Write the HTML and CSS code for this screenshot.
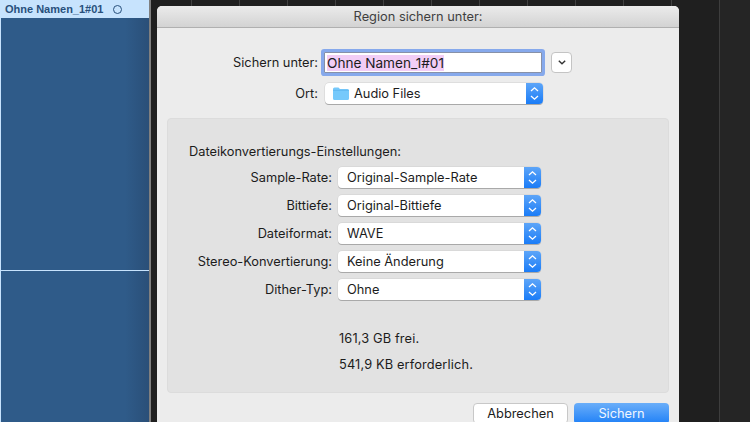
FILE: index.html
```html
<!DOCTYPE html>
<html lang="de">
<head>
    <meta charset="UTF-8">
    <meta name="viewport" content="width=device-width, initial-scale=1.0">
    <title>Region sichern unter</title>
    <link rel="stylesheet" href="styles.css">
</head>
<body>
    <div class="stage">
        <!-- Region im Hintergrund -->
        <div class="region">
            <div class="region-head">
                <span class="region-name">Ohne Namen_1#01</span>
                <span class="region-dot"></span>
            </div>
            <div class="region-top"></div>
            <div class="region-bottom"></div>
        </div>

        <!-- Dialog -->
        <div class="dialog">
            <div class="titlebar">Region sichern unter:</div>
            <div class="dialog-body">
                <div class="top-form">
                    <div class="row">
                        <label class="top-label">Sichern unter:</label>
                        <div class="name-input"><span class="selected">Ohne Namen_1#01</span></div>
                        <button class="expand">
                            <svg width="8" height="5" viewBox="0 0 8 5"><path d="M0.8 0.8 L4 3.8 L7.2 0.8" fill="none" stroke="#333" stroke-width="1.4"/></svg>
                        </button>
                    </div>
                    <div class="row">
                        <label class="top-label">Ort:</label>
                        <div class="select select-ort">
                            <svg class="folder" width="16" height="13" viewBox="0 0 16 13"><path d="M0 2 Q0 0.5 1.5 0.5 H5.5 L7 2 H14.5 Q16 2 16 3.5 V11.5 Q16 13 14.5 13 H1.5 Q0 13 0 11.5 Z" fill="#76c9fb"/><path d="M0 3.4 H16" stroke="#5db6ee" stroke-width="0.8"/></svg>
                            <span class="select-text">Audio Files</span>
                            <span class="stepper">
                                <svg width="9" height="15" viewBox="0 0 9 15"><path d="M1 5 L4.5 1.8 L8 5 M1 10 L4.5 13.2 L8 10" fill="none" stroke="#fff" stroke-width="1.3"/></svg>
                            </span>
                        </div>
                    </div>
                </div>

                <div class="panel">
                    <div class="panel-title">Dateikonvertierungs-Einstellungen:</div>
                    <div class="settings">
                        <div class="row setting">
                            <label class="set-label">Sample-Rate:</label>
                            <div class="select"><span class="select-text">Original-Sample-Rate</span><span class="stepper"><svg width="9" height="15" viewBox="0 0 9 15"><path d="M1 5 L4.5 1.8 L8 5 M1 10 L4.5 13.2 L8 10" fill="none" stroke="#fff" stroke-width="1.3"/></svg></span></div>
                        </div>
                        <div class="row setting">
                            <label class="set-label">Bittiefe:</label>
                            <div class="select"><span class="select-text">Original-Bittiefe</span><span class="stepper"><svg width="9" height="15" viewBox="0 0 9 15"><path d="M1 5 L4.5 1.8 L8 5 M1 10 L4.5 13.2 L8 10" fill="none" stroke="#fff" stroke-width="1.3"/></svg></span></div>
                        </div>
                        <div class="row setting">
                            <label class="set-label">Dateiformat:</label>
                            <div class="select"><span class="select-text">WAVE</span><span class="stepper"><svg width="9" height="15" viewBox="0 0 9 15"><path d="M1 5 L4.5 1.8 L8 5 M1 10 L4.5 13.2 L8 10" fill="none" stroke="#fff" stroke-width="1.3"/></svg></span></div>
                        </div>
                        <div class="row setting">
                            <label class="set-label">Stereo-Konvertierung:</label>
                            <div class="select"><span class="select-text">Keine Änderung</span><span class="stepper"><svg width="9" height="15" viewBox="0 0 9 15"><path d="M1 5 L4.5 1.8 L8 5 M1 10 L4.5 13.2 L8 10" fill="none" stroke="#fff" stroke-width="1.3"/></svg></span></div>
                        </div>
                        <div class="row setting">
                            <label class="set-label">Dither-Typ:</label>
                            <div class="select"><span class="select-text">Ohne</span><span class="stepper"><svg width="9" height="15" viewBox="0 0 9 15"><path d="M1 5 L4.5 1.8 L8 5 M1 10 L4.5 13.2 L8 10" fill="none" stroke="#fff" stroke-width="1.3"/></svg></span></div>
                        </div>
                    </div>
                    <div class="info">
                        <p>161,3 GB frei.</p>
                        <p>541,9 KB erforderlich.</p>
                    </div>
                </div>

                <div class="buttons">
                    <button class="btn">Abbrechen</button>
                    <button class="btn btn-primary">Sichern</button>
                </div>
            </div>
        </div>
    </div>
</body>
</html>
```

FILE: styles.css
```css
* {
    box-sizing: border-box;
    margin: 0;
    padding: 0;
}

html, body {
    height: 100%;
    overflow: hidden;
}

body {
    font-family: Inter, "Liberation Sans", sans-serif;
    font-size: 12.8px;
    color: #1c1c1c;
    background: #1f1f1f;
}

/* Hintergrund mit Lineal-Strichen */
.stage {
    position: relative;
    display: flex;
    align-items: flex-start;
    width: 750px;
    height: 422px;
    overflow: hidden;
    background:
        linear-gradient(#1f1f1f, #1f1f1f) 0 6px / 100% 100% no-repeat,
        repeating-linear-gradient(90deg, #404040 0, #404040 1px, #1f1f1f 1px, #1f1f1f 48px) -1px 0;
}

.stage::after {
    content: "";
    position: absolute;
    top: 0;
    bottom: 0;
    left: 719px;
    right: 0;
    border-left: 1px solid #3d3d3d;
    background: #252525;
}

/* Region links */
.region {
    display: flex;
    flex-direction: column;
    flex: none;
    width: 151px;
    height: 422px;
    border-left: 1px solid #c7e3fd;
    border-right: 2px solid #7f7f7f;
}

.region-head {
    display: flex;
    align-items: center;
    gap: 10px;
    height: 18px;
    padding-left: 4px;
    background: #c7e3fd;
    color: #28507c;
}

.region-name {
    font-family: "Liberation Sans", sans-serif;
    font-size: 11px;
    font-weight: bold;
}

.region-dot {
    width: 9px;
    height: 9px;
    border: 1px solid #28507c;
    border-radius: 50%;
}

.region-top,
.region-bottom {
    background: linear-gradient(90deg, #2f5b89 0, #2f5b89 84%, #2a4f78 100%);
}

.region-top {
    height: 253px;
    border-bottom: 1px solid #c7e3fd;
}

.region-bottom {
    flex: 1;
}

/* Dialog */
.dialog {
    position: relative;
    z-index: 1;
    flex: none;
    width: 522px;
    height: 430px;
    margin: 6px 0 0 6px;
    background: #ececec;
    border-radius: 5px 5px 0 0;
}

.titlebar {
    height: 22px;
    line-height: 22px;
    text-align: center;
    color: #3f3f3f;
    background: linear-gradient(#ebebeb, #d3d3d3);
    border-bottom: 1px solid #b0b0b0;
    border-radius: 5px 5px 0 0;
}

.dialog-body {
    padding: 24px 10px 0;
}

.row {
    display: flex;
    align-items: center;
}

.top-form {
    display: flex;
    flex-direction: column;
    gap: 10px;
}

.top-label {
    width: 151px;
    margin-right: 7px;
    text-align: right;
}

.name-input {
    display: flex;
    align-items: center;
    width: 218px;
    height: 21px;
    margin-left: -1px;
    padding-left: 2px;
    background: #fff;
    border: 1px solid #8791a8;
    box-shadow: 0 0 0 3px #86a9ec;
    border-radius: 1px;
    font-size: 13.6px;
}

.selected {
    background: #f2cdf6;
}

.expand {
    display: flex;
    align-items: center;
    justify-content: center;
    width: 21px;
    height: 21px;
    margin-left: 9px;
    background: #fff;
    border: 1px solid #c4c4c4;
    border-radius: 4px;
}

.select {
    display: flex;
    align-items: center;
    width: 203px;
    height: 21px;
    background: #fff;
    border-radius: 4px;
    box-shadow: 0 1px 0 #a9a9a9, 0 0 0 0.5px #cfcfcf;
}

.select-ort {
    width: 218px;
}

.folder {
    margin-left: 8px;
    margin-right: 5px;
}

.select-text {
    flex: 1;
    padding-left: 9px;
}

.select-ort .select-text {
    padding-left: 0;
}

.stepper {
    display: flex;
    align-items: center;
    justify-content: center;
    flex: none;
    width: 17px;
    height: 21px;
    background: linear-gradient(#5da5f8, #1a7cf7);
    border-radius: 0 4px 4px 0;
}

/* Einstellungen */
.panel {
    height: 275px;
    margin-top: 14px;
    padding-top: 25px;
    background: #e2e2e2;
    border: 1px solid #dcdcdc;
    border-radius: 4px;
}

.panel-title {
    padding-left: 21px;
}

.settings {
    display: flex;
    flex-direction: column;
    gap: 7px;
    margin-top: 8px;
}

.set-label {
    width: 164px;
    margin-right: 6px;
    text-align: right;
}

.info {
    margin-top: 31px;
    padding-left: 171px;
    letter-spacing: 0.14px;
}

.info p {
    margin-bottom: 11px;
}

/* Knoepfe */
.buttons {
    display: flex;
    justify-content: flex-end;
    gap: 6px;
    margin-top: 10px;
}

.btn {
    width: 95px;
    height: 21px;
    font: inherit;
    color: #1c1c1c;
    background: #fff;
    border: 1px solid #c8c8c8;
    border-radius: 4px;
}

.btn-primary {
    color: #f0f6ff;
    background: linear-gradient(#6aaef9, #1f80f7);
    border: none;
}
```
